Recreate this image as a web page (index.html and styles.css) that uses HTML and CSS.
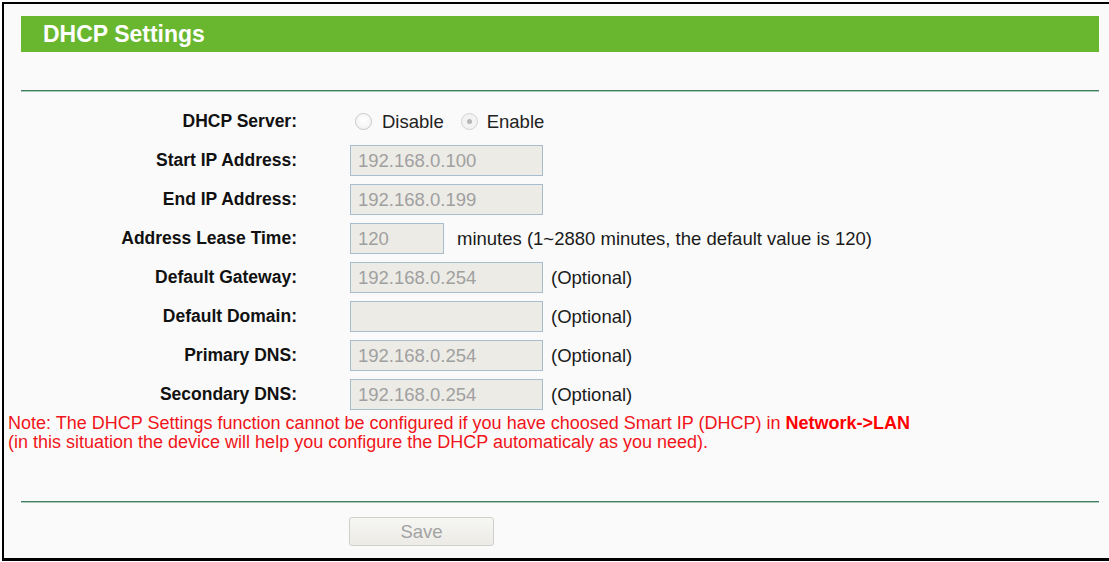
FILE: index.html
```html
<!DOCTYPE html>
<html>
<head>
<meta charset="utf-8">
<title>DHCP Settings</title>
<link rel="stylesheet" href="styles.css">
</head>
<body>
<div class="frame">
  <div class="title">DHCP Settings</div>
  <div class="rule rule-top"></div>
  <div class="form">
    <div class="label">DHCP Server:</div>
    <div class="field radios">
      <span class="radio"></span><span class="radio-text">Disable</span>
      <span class="radio checked"></span><span class="radio-text">Enable</span>
    </div>

    <div class="label">Start IP Address:</div>
    <div class="field"><input class="box" type="text" value="192.168.0.100" disabled></div>

    <div class="label">End IP Address:</div>
    <div class="field"><input class="box" type="text" value="192.168.0.199" disabled></div>

    <div class="label">Address Lease Time:</div>
    <div class="field"><input class="box box-short" type="text" value="120" disabled><span class="hint hint-wide">minutes (1~2880 minutes, the default value is 120)</span></div>

    <div class="label">Default Gateway:</div>
    <div class="field"><input class="box" type="text" value="192.168.0.254" disabled><span class="hint">(Optional)</span></div>

    <div class="label">Default Domain:</div>
    <div class="field"><input class="box" type="text" value="" disabled><span class="hint">(Optional)</span></div>

    <div class="label">Primary DNS:</div>
    <div class="field"><input class="box" type="text" value="192.168.0.254" disabled><span class="hint">(Optional)</span></div>

    <div class="label">Secondary DNS:</div>
    <div class="field"><input class="box" type="text" value="192.168.0.254" disabled><span class="hint">(Optional)</span></div>
  </div>
  <p class="note">Note: The DHCP Settings function cannot be configured if you have choosed Smart IP (DHCP) in <b>Network-&gt;LAN</b><br>(in this situation the device will help you configure the DHCP automaticaly as you need).</p>
  <div class="rule rule-bottom"></div>
  <div class="actions"><button class="save" type="button" disabled>Save</button></div>
</div>
</body>
</html>
```

FILE: styles.css
```css
html, body {
  margin: 0;
  padding: 0;
  background: #ffffff;
}

body {
  font-family: "Liberation Sans", Arial, sans-serif;
  color: #000;
}

.frame {
  margin: 2px 0 0 2px;
  border-top: 2px solid #000;
  border-left: 2px solid #000;
  border-bottom: 3px solid #000;
  background: #fafafa;
  padding-bottom: 12px;
}

.title {
  margin: 12px 10px 0 17px;
  height: 36px;
  line-height: 36px;
  background: #69b72f;
  color: #fff;
  font-weight: bold;
  font-size: 23px;
  padding-left: 22px;
}

.rule {
  margin: 0 10px 0 17px;
  height: 2px;
  background: linear-gradient(#3f7f60 0, #3f7f60 1px, #a9cdb9 1px, #a9cdb9 2px);
}

.rule-top {
  margin-top: 38px;
}

.rule-bottom {
  margin-top: 49px;
}

.form {
  margin-top: 10px;
  display: grid;
  grid-template-columns: 293px 1fr;
  grid-auto-rows: 39px;
  column-gap: 53px;
  align-items: center;
}

.label {
  text-align: right;
  font-weight: bold;
  font-size: 17.5px;
  color: #111;
}

.field {
  display: flex;
  align-items: center;
  font-size: 18.5px;
  color: #111;
}

.radio {
  box-sizing: border-box;
  width: 17px;
  height: 17px;
  border-radius: 50%;
  border: 1px solid #c9c9c9;
  background: radial-gradient(circle at 50% 40%, #ffffff 0, #f6f6f6 60%, #e9e9e9 100%);
  margin-left: 5px;
  position: relative;
}

.radio.checked {
  margin-left: 17px;
  border-color: #d2d2d2;
  background: #f3f3f3;
}

.radio.checked::after {
  content: "";
  position: absolute;
  left: 5px;
  top: 5px;
  width: 5px;
  height: 5px;
  border-radius: 50%;
  background: #b5b5b5;
}

.radio-text {
  margin-left: 10px;
  color: #222;
}

.radio.checked + .radio-text {
  margin-left: 9px;
}

.box {
  box-sizing: border-box;
  width: 193px;
  height: 31px;
  margin: 0;
  border: 1px solid #a8bccf;
  background: #ecebe6;
  padding: 0 7px;
  font-family: "Liberation Sans", Arial, sans-serif;
  font-size: 18.5px;
  color: #a0a0a0;
  -webkit-text-fill-color: #a0a0a0;
  opacity: 1;
}

.box-short {
  width: 94px;
}

.hint {
  margin-left: 8px;
  color: #1a1a1a;
}

.hint-wide {
  margin-left: 13px;
}

.note {
  margin: 0 0 0 4px;
  font-size: 18px;
  line-height: 19px;
  color: #f0151b;
}

.note b {
  color: #ff0000;
}

.actions {
  margin-top: 14px;
  padding-left: 345px;
}

.save {
  box-sizing: border-box;
  width: 145px;
  height: 29px;
  margin: 0;
  border: 1px solid #cfcfcc;
  border-radius: 3px;
  background: linear-gradient(#f6f6f3, #ecebe6);
  font-family: "Liberation Sans", Arial, sans-serif;
  font-size: 18.5px;
  color: #a3a3a3;
  padding: 0;
}
```
